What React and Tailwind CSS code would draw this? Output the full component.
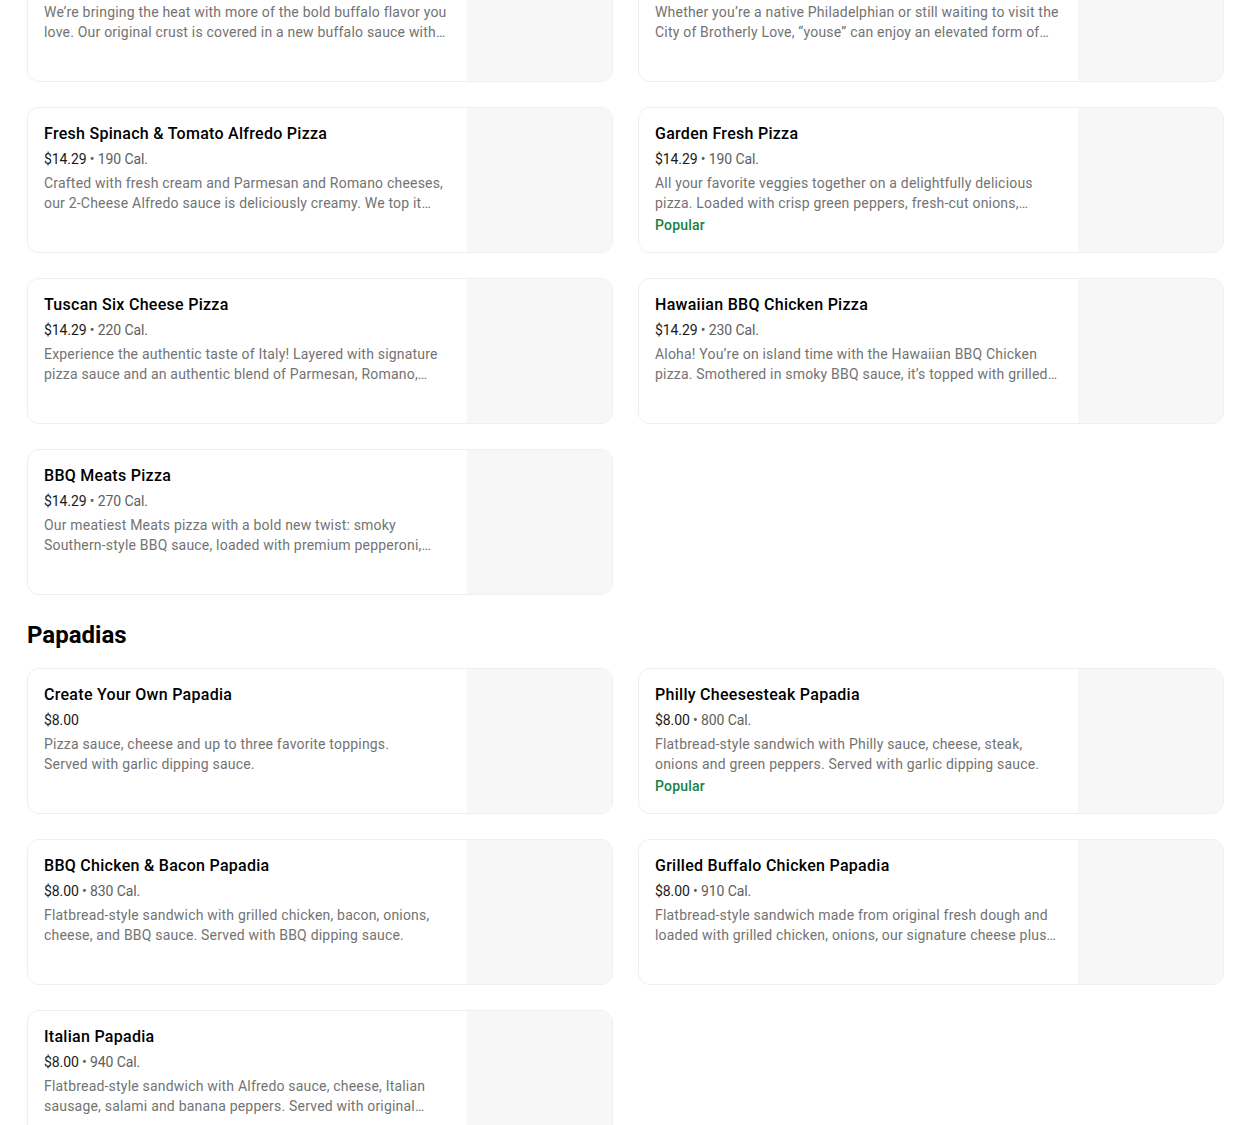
import React from "react";

const sections = [
  {
    title: null,
    items: [
      { name: "Spicy Buffalo Chicken Pizza", price: "$14.29", cal: "250 Cal.", desc: "We’re bringing the heat with more of the bold buffalo flavor you love. Our original crust is covered in a new buffalo sauce with creamy ranch, grilled chicken and more." },
      { name: "The Philly Cheesesteak Pizza", price: "$14.29", cal: "210 Cal.", desc: "Whether you’re a native Philadelphian or still waiting to visit the City of Brotherly Love, “youse” can enjoy an elevated form of the classic cheesesteak." },
      { name: "Fresh Spinach & Tomato Alfredo Pizza", price: "$14.29", cal: "190 Cal.", desc: "Crafted with fresh cream and Parmesan and Romano cheeses, our 2-Cheese Alfredo sauce is deliciously creamy. We top it with fresh spinach and tomatoes." },
      { name: "Garden Fresh Pizza", price: "$14.29", cal: "190 Cal.", desc: "All your favorite veggies together on a delightfully delicious pizza. Loaded with crisp green peppers, fresh-cut onions, mushrooms and black olives.", popular: true },
      { name: "Tuscan Six Cheese Pizza", price: "$14.29", cal: "220 Cal.", desc: "Experience the authentic taste of Italy! Layered with signature pizza sauce and an authentic blend of Parmesan, Romano, Asiago, Fontina and provolone." },
      { name: "Hawaiian BBQ Chicken Pizza", price: "$14.29", cal: "230 Cal.", desc: "Aloha! You’re on island time with the Hawaiian BBQ Chicken pizza. Smothered in smoky BBQ sauce, it’s topped with grilled chicken, bacon, pineapple and onions." },
      { name: "BBQ Meats Pizza", price: "$14.29", cal: "270 Cal.", desc: "Our meatiest Meats pizza with a bold new twist: smoky Southern-style BBQ sauce, loaded with premium pepperoni, sausage, bacon and more." },
    ],
  },
  {
    title: "Papadias",
    items: [
      { name: "Create Your Own Papadia", price: "$8.00", cal: null, desc: "Pizza sauce, cheese and up to three favorite toppings.\nServed with garlic dipping sauce." },
      { name: "Philly Cheesesteak Papadia", price: "$8.00", cal: "800 Cal.", desc: "Flatbread-style sandwich with Philly sauce, cheese, steak, onions and green peppers. Served with garlic dipping sauce.", popular: true },
      { name: "BBQ Chicken & Bacon Papadia", price: "$8.00", cal: "830 Cal.", desc: "Flatbread-style sandwich with grilled chicken, bacon, onions, cheese, and BBQ sauce. Served with BBQ dipping sauce." },
      { name: "Grilled Buffalo Chicken Papadia", price: "$8.00", cal: "910 Cal.", desc: "Flatbread-style sandwich made from original fresh dough and loaded with grilled chicken, onions, our signature cheese plus buffalo sauce." },
      { name: "Italian Papadia", price: "$8.00", cal: "940 Cal.", desc: "Flatbread-style sandwich with Alfredo sauce, cheese, Italian sausage, salami and banana peppers. Served with original pizza sauce." },
    ],
  },
];

function Card({ item }) {
  return (
    <div className="flex h-[146px] overflow-hidden rounded-xl border border-[#efefef] bg-white">
      <div className="flex-1 min-w-0 pl-4 pr-4 pt-4">
        <div className="text-[16px] leading-[20px] font-medium tracking-[0.28px] text-black truncate">{item.name}</div>
        <div className="mt-[5px] text-[14px] leading-[20px] tracking-[-0.1px]">
          <span className="text-[#1a1a1a]">{item.price}</span>
          {item.cal && <span className="text-[#5e5e5e]"> • {item.cal}</span>}
        </div>
        <div className="mt-[4px] text-[14px] leading-[20px] tracking-[0.2px] text-[#737373] line-clamp-2 whitespace-pre-line">{item.desc}</div>
        {item.popular && <div className="mt-[2px] text-[14px] leading-[20px] font-medium tracking-[0.2px] text-[#1a7f45]">Popular</div>}
      </div>
      <div className="w-[145px] shrink-0 bg-[#f7f7f7]" />
    </div>
  );
}

export default function App() {
  return (
    <div className="bg-white px-[27px] pr-[26px] overflow-hidden h-[1125px]" style={{ fontFamily: "Roboto, 'Noto Sans', sans-serif" }}>
      <div className="-mt-[64px]">
        {sections.map((s, i) => (
          <div key={i}>
            {s.title && (
              <h2 className="mt-[24px] mb-[17px] text-[24px] leading-[32px] font-bold text-black">{s.title}</h2>
            )}
            <div className="grid grid-cols-2 gap-x-[25px] gap-y-[25px]">
              {s.items.map((it, j) => (
                <Card key={j} item={it} />
              ))}
            </div>
          </div>
        ))}
      </div>
    </div>
  );
}
